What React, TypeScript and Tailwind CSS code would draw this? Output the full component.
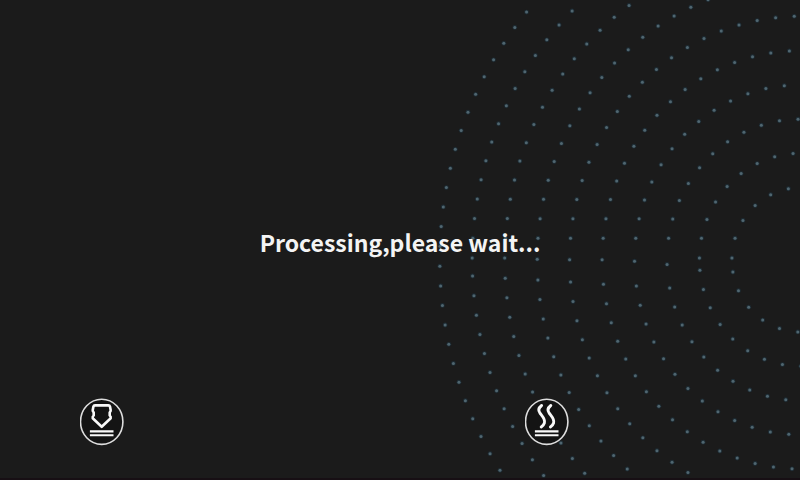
import type { ReactNode } from "react";

type Ring = { rx: number; up: number; down: number; mid?: number };
type Dot = { x: number; y: number };

const CENTER = { x: 370, y: 259.6 };
const STRETCH = 1.056;
const STEP = 19.7;

// Rings from the outside in. `up` and `down` are the heights at which the
// upper and lower chains of dots begin; `mid` is the dot where they meet.
const rings: Ring[] = [
  { rx: 360.4, up: 246, down: 266 },
  { rx: 328, up: 238, down: 275.8, mid: 257.8 },
  { rx: 295.5, up: 238, down: 278, mid: 257.8 },
  { rx: 263, up: 238, down: 279.8, mid: 259 },
  { rx: 230.6, up: 238, down: 281.9, mid: 259.5 },
  { rx: 198.1, up: 238, down: 284, mid: 259.6 },
  { rx: 165.7, up: 238, down: 285.9, mid: 261 },
  { rx: 133.2, up: 238, down: 287.8, mid: 264.2 },
  { rx: 100.8, up: 238, down: 270, mid: 257.8 },
  { rx: 68.3, up: 238, down: 271.8, mid: 257.8 },
];

function ringDots({ rx, up, down, mid }: Ring): Dot[] {
  const ry = rx * STRETCH;
  const at = (a: number): Dot => ({
    x: CENTER.x - rx * Math.cos(a),
    y: CENTER.y + ry * Math.sin(a),
  });
  const angle = (y: number) => Math.asin((y - CENTER.y) / ry);
  const dots: Dot[] = mid === undefined ? [] : [at(angle(mid))];
  for (let a = angle(up); a > -1.75; a -= STEP / ry) dots.push(at(a));
  for (let a = angle(down); a < 1.75; a += STEP / ry) dots.push(at(a));
  return dots.filter((d) => d.y > -2 && d.y < 477 && d.x < 372);
}

const dots = rings.flatMap(ringDots);

function DottedRings() {
  return (
    <svg
      aria-hidden="true"
      viewBox="0 0 370 480"
      className="absolute top-0 right-0 h-[480px] w-[370px]"
    >
      {dots.map((d, i) => (
        <g key={i}>
          <circle cx={d.x + 0.2} cy={d.y + 0.2} r="2.4" fill="#1d2b33" />
          <circle cx={d.x + 0.2} cy={d.y + 0.2} r="1.5" fill="#506670" />
        </g>
      ))}
    </svg>
  );
}

function StatusIcon({ label, children }: { label: string; children: ReactNode }) {
  return (
    <svg
      role="img"
      aria-label={label}
      viewBox="0 0 44 48"
      className="h-12 w-11"
      fill="none"
      stroke="#fafafa"
    >
      <ellipse cx="21.7" cy="23.8" rx="21.2" ry="22.6" fill="#141414" stroke="#dedede" strokeWidth="1.6" />
      {children}
      <path d="M9.9 33.4H33.5M9.9 37.3H33.5" strokeWidth="2.1" />
    </svg>
  );
}

export default function App() {
  return (
    <main className="relative grid min-h-screen grid-rows-[1fr_auto_1fr] overflow-hidden border-b-2 border-[#170f14] bg-[#1b1b1b] font-['Noto_Sans_CJK_SC',sans-serif] text-[#f4f4f4]">
      <DottedRings />
      <p role="status" className="relative row-start-2 pt-1.5 text-center text-[23px]/9 font-bold">
        Processing,please wait...
      </p>
      <div className="relative row-start-3 grid grid-cols-[445fr_275fr] items-end pb-8 pl-20">
        <StatusIcon label="Brewing">
          <path
            d="M13.4 8.6Q13.7 7.4 15 7.4H28.4Q29.7 7.4 30 8.6L30.7 12.2Q30.8 13.4 29.7 14.4V17.4Q31.1 18.8 30.7 20.2L21.7 28.8L12.7 20.2Q12.3 18.8 13.7 17.4V14.4Q12.6 13.4 12.7 12.2Z"
            strokeWidth="2.6"
            strokeLinejoin="round"
          />
        </StatusIcon>
        <StatusIcon label="Heating">
          <path
            d="M16.6 7.5C13.4 10 13 12.5 15 15.2C17.5 18.5 20.6 21.5 19.4 25Q18.6 27.5 16.2 29M25.8 7.5C22.6 10 22.2 12.5 24.2 15.2C26.7 18.5 29.8 21.5 28.6 25Q27.8 27.5 25.4 29"
            strokeWidth="2.9"
            strokeLinecap="round"
          />
        </StatusIcon>
      </div>
    </main>
  );
}
